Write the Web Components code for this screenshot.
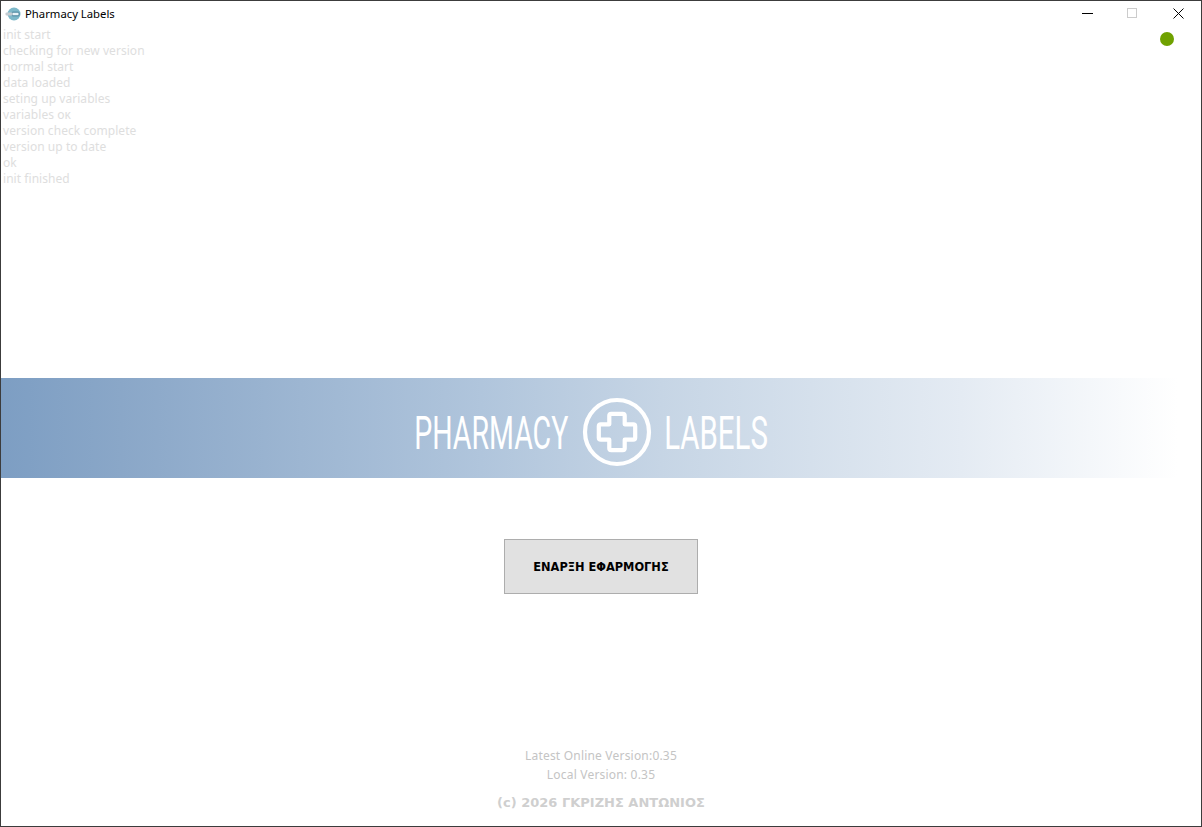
<!DOCTYPE html>
<html><head><meta charset="utf-8"><title>Pharmacy Labels</title>
<style>html,body{margin:0;padding:0;background:#fff}</style></head>
<body>
<app-window>
<title-bar slot="title">Pharmacy Labels</title-bar>
<log-panel>
<span>init start</span><span>checking for new version</span><span>normal start</span><span>data loaded</span><span>seting up variables</span><span>variables oκ</span><span>version check complete</span><span>version up to date</span><span>ok</span><span>init finished</span>
</log-panel>
<logo-banner></logo-banner>
<start-button>ΕΝΑΡΞΗ ΕΦΑΡΜΟΓΗΣ</start-button>
<version-footer></version-footer>
</app-window>
<script>
function def(name, html){
  customElements.define(name, class extends HTMLElement{
    constructor(){super();this.attachShadow({mode:'open'}).innerHTML=html;}
  });
}
def('app-window',`<style>
:host{display:flex;flex-direction:column;box-sizing:border-box;width:1202px;height:827px;border:1px solid #3c3c3c;background:#fff;overflow:hidden;position:relative}
</style><slot name="title"></slot><slot></slot>`);
def('title-bar',`<style>
:host{display:flex;align-items:center;height:25px;flex:none;font:11.3px "Noto Sans","Open Sans",sans-serif;color:#000}
.ic{width:18px;height:16px;margin:0 3px 0 3px;flex:none}
.t{flex:1;padding-bottom:1px}
.b{width:45px;height:25px;display:flex;align-items:center;justify-content:center;flex:none}
.b.m{position:relative;left:-1px}
</style>
<svg class="ic" viewBox="0 0 18 16"><circle cx="10" cy="8" r="6.5" fill="#7db8c9"/><rect x="8" y="6.2" width="7" height="3.6" rx=".8" fill="#e8f4f8" stroke="#2f6f8a" stroke-width=".8"/><rect x="1.5" y="6.5" width="7" height="3" rx="1" fill="#c4ccd2"/></svg>
<span class="t"><slot></slot></span>
<span class="b m"><svg width="11" height="11" viewBox="0 0 11 11"><path d="M0 5.5h11" stroke="#000" stroke-width="1"/></svg></span>
<span class="b m"><svg width="11" height="11" viewBox="0 0 11 11"><rect x=".5" y=".5" width="9" height="9" fill="none" stroke="#ccc"/></svg></span>
<span class="b"><svg width="11" height="11" viewBox="0 0 11 11"><path d="M.5.5l10 10M10.5.5l-10 10" stroke="#000" stroke-width="1"/></svg></span>`);
def('log-panel',`<style>
:host{display:block;height:352px;flex:none;box-sizing:border-box;padding:1px 0 0 2px;position:relative;font:12px/16px "Noto Sans","Open Sans",sans-serif;letter-spacing:.05px;color:#dedede}
::slotted(span){display:block}
.dot{position:absolute;right:27px;top:6px;width:14px;height:14px;border-radius:50%;background:#6fa100}
</style><slot></slot><span class="dot"></span>`);
def('logo-banner',`<style>
:host{display:flex;align-items:center;justify-content:center;height:100px;flex:none;background:linear-gradient(90deg,#7d9ec3 0%,#8aa7c8 10%,#b0c5dc 40%,#c6d5e5 55%,#e4ebf3 80%,#fff 98%);color:#fff;font:400 46px/1 Roboto,sans-serif;gap:14px;padding:8px 18px 0 0;box-sizing:border-box}
.w{display:inline-block;width:var(--w);white-space:nowrap;text-align:center}
.w span{display:inline-block;transform:scaleX(var(--s));margin:0 -60px;padding-top:2px}
svg{width:70px;height:70px;flex:none}
</style>
<span class="w" style="--w:154px;--s:.62"><span>PHARMACY</span></span>
<svg viewBox="0 0 70 70"><circle cx="35" cy="35" r="32" fill="none" stroke="#fff" stroke-width="4.2"/><path d="M29.3 16.8h11.4a2 2 0 0 1 2 2v8.5h8.5a2 2 0 0 1 2 2v11.4a2 2 0 0 1-2 2h-8.5v8.5a2 2 0 0 1-2 2H29.3a2 2 0 0 1-2-2v-8.5h-8.5a2 2 0 0 1-2-2V29.3a2 2 0 0 1 2-2h8.5v-8.5a2 2 0 0 1 2-2z" fill="none" stroke="#fff" stroke-width="4.2" stroke-linejoin="round"/></svg>
<span class="w" style="--w:104px;--s:.64;margin:0 2px 0 -2px"><span>LABELS</span></span>`);
def('start-button',`<style>
:host{display:flex;justify-content:center;flex:none;margin-top:61px}
button{box-sizing:border-box;width:194px;height:55px;background:#e1e1e1;border:1px solid #adadad;font:bold 11.4px "DejaVu Sans",sans-serif;color:#000;padding:0;margin:0}
</style><button><slot></slot></button>`);
def('version-footer',`<style>
:host{display:flex;flex-direction:column;align-items:center;flex:none;margin-top:152px;font:12px/19px "Noto Sans","Open Sans",sans-serif;letter-spacing:.2px;color:#c4c4c4}
.c{margin-top:9px;font:bold 13px/19px "DejaVu Sans",sans-serif;letter-spacing:0;color:#cfcfcf}
</style><span>Latest Online Version:0.35</span><span>Local Version: 0.35</span><span class="c">(c) 2026 ΓΚΡΙΖΗΣ ΑΝΤΩΝΙΟΣ</span>`);
</script>
</body></html>
